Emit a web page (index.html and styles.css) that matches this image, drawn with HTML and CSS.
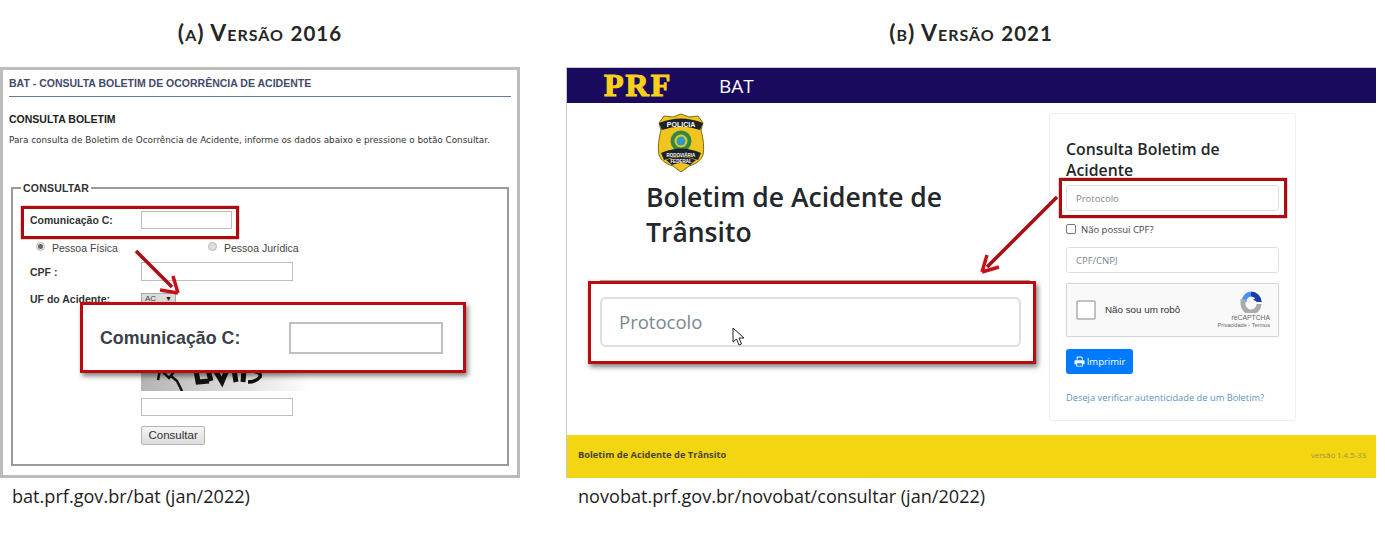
FILE: index.html
```html
<!DOCTYPE html>
<html lang="pt-BR">
<head>
<meta charset="utf-8">
<title>BAT - Versões 2016 e 2021</title>
<link rel="stylesheet" href="styles.css">
</head>
<body>
<main class="slide">
  <section class="version version-old">
    <h2 class="version-title">(a) Versão <span class="year">2016</span></h2>
    <div class="old-panel">
      <h1 class="old-heading">BAT - CONSULTA BOLETIM DE OCORRÊNCIA DE ACIDENTE</h1>
      <h3 class="old-sub">CONSULTA BOLETIM</h3>
      <p class="old-intro">Para consulta de Boletim de Ocorrência de Acidente, informe os dados abaixo e pressione o botão Consultar.</p>
      <fieldset class="old-fieldset">
        <legend class="old-legend">CONSULTAR</legend>
        <div class="old-row old-row-com">
          <label class="old-label">Comunicação C:</label>
          <span class="old-input old-input-short"></span>
        </div>
        <div class="old-radios">
          <span class="radio-item radio-first"><i class="old-radio old-radio-on"></i>Pessoa Física</span>
          <span class="radio-item"><i class="old-radio"></i>Pessoa Jurídica</span>
        </div>
        <div class="old-row old-row-cpf">
          <label class="old-label">CPF :</label>
          <span class="old-input"></span>
        </div>
        <div class="old-row old-row-uf">
          <label class="old-label">UF do Acidente:</label>
          <span class="old-select">AC<b class="old-caret">▼</b></span>
        </div>
        <div class="old-controls">
          <div class="old-captcha">
            <svg class="captcha-art" width="170" height="24" viewBox="0 0 170 24" aria-hidden="true">
              <g fill="none" stroke="#111">
                <path stroke-width="2.500" d="M19 3 L17 13 M21 4 L28 11 L33 5 M30 9 L36 14 L41 24"/>
                <path stroke-width="5" d="M55 3 L57 15 L68 14 M67 3 L70 14 M74 3 L81 15 L86 3 M93 3 L95 15 M103 3 L102 15"/>
                <path stroke-width="3.500" d="M110 4 Q121 5 119 10 Q115 15 107 15"/>
                <path stroke-width="2" stroke="#c01018" d="M150 5 L156 5"/>
              </g>
            </svg>
          </div>
          <span class="old-input old-input-captcha"></span>
          <span class="old-button">Consultar</span>
        </div>
      </fieldset>

      <div class="mark mark-old"></div>
      <svg class="arrow arrow-old" width="60" height="60" viewBox="0 0 60 60" aria-hidden="true">
        <path d="M4 5 L40 41" stroke="#a80f14" stroke-width="3.500" fill="none"/>
        <path d="M46 47 L41 30 M46 47 L28 44" stroke="#c8101a" stroke-width="3.500" fill="none"/>
      </svg>
      <div class="zoom-box zoom-old">
        <span class="zoom-old-label">Comunicação C:</span>
        <span class="zoom-old-input"></span>
      </div>
    </div>
    <p class="caption">bat.prf.gov.br/bat (jan/2022)</p>
  </section>

  <section class="version version-new">
    <h2 class="version-title">(b) Versão <span class="year">2021</span></h2>
    <div class="new-panel">
      <header class="new-header">
        <span class="prf-logo">PRF</span>
        <span class="new-brand">BAT</span>
      </header>
      <div class="new-body">
        <div class="new-main">
          <svg class="badge" width="50" height="60" viewBox="0 0 50 60" aria-hidden="true">
            <path d="M25 1 L33 4 L42 3 L47 10 L45 17 Q49 32 47 42 Q44 50 33 53 L25 59 L17 53 Q6 50 3 42 Q1 32 5 17 L3 10 L8 3 L17 4 Z" fill="#f2c51e" stroke="#7d6a20" stroke-width="1"/>
            <path d="M3 10 Q25 1 47 10 L44 17 Q25 10 6 17 Z" fill="#1d2128"/>
            <text class="badge-top" x="25" y="14">POLICIA</text>
            <circle cx="25" cy="28" r="10.500" fill="#2e8a46"/>
            <circle cx="25" cy="28" r="6.500" fill="#f2c51e"/>
            <circle cx="25" cy="28" r="4.500" fill="#2c9bc5"/>
            <path d="M5 40 Q25 31 45 40 L42 47 Q25 40 8 47 Z M10 47 Q25 41 40 47 L34 52 Q25 48 16 52 Z" fill="#1d2128"/>
            <text class="badge-low" x="25" y="44">RODOVIÁRIA</text>
            <text class="badge-low" x="25" y="50">FEDERAL</text>
          </svg>
          <h1 class="new-title">Boletim de Acidente de Trânsito</h1>
          <hr class="new-rule">
        </div>
        <aside class="new-card">
          <h3 class="card-title">Consulta Boletim de Acidente</h3>
          <div class="new-input card-protocol">Protocolo</div>
          <label class="card-check"><i class="check-box"></i>Não possui CPF?</label>
          <div class="new-input card-cpf">CPF/CNPJ</div>
          <div class="recaptcha">
            <i class="re-box"></i>
            <span class="re-text">Não sou um robô</span>
            <div class="re-brand">
              <svg class="re-logo" width="24" height="22" viewBox="0 0 24 22" aria-hidden="true">
                <path d="M5 11 A8 8 0 0 1 12 3" fill="none" stroke="#4a90f0" stroke-width="5"/>
                <path d="M12 3 A8 8 0 0 1 20 11" fill="none" stroke="#1f3da8" stroke-width="5"/>
                <path d="M20 11 L23 11 L19 5 L14 9 Z" fill="#1f3da8"/>
                <path d="M20 13 A8 8 0 0 1 4 13 L4 8" fill="none" stroke="#ababab" stroke-width="5"/>
              </svg>
              <span class="re-name">reCAPTCHA</span>
              <span class="re-links">Privacidade - Termos</span>
            </div>
          </div>
          <span class="print-button">
            <svg width="11" height="11" viewBox="0 0 12 12" aria-hidden="true"><path fill="#fff" d="M3 0.5h5l1.5 1.5V4H8.600V2.600L7.600 1.500H4V4H3Z M1.500 4.500h9a1 1 0 0 1 1 1V9H9.500v2.500h-7V9H.5V5.500a1 1 0 0 1 1-1Z M3.500 8v2.500h5V8Z" fill-rule="evenodd"/></svg>
            Imprimir
          </span>
          <a class="card-link">Deseja verificar autenticidade de um Boletim?</a>
        </aside>
      </div>
      <footer class="new-footer">
        <strong class="footer-name">Boletim de Acidente de Trânsito</strong>
        <span class="footer-version">versão 1.4.5-33</span>
      </footer>

      <div class="mark mark-new"></div>
      <svg class="arrow arrow-new" width="90" height="90" viewBox="0 0 90 90" aria-hidden="true">
        <path d="M80 4 L10 74" stroke="#a80f14" stroke-width="3.500" fill="none"/>
        <path d="M5 79 L10 62 M5 79 L22 74" stroke="#c8101a" stroke-width="3.500" fill="none"/>
      </svg>
      <div class="zoom-box zoom-new">
        <div class="zoom-new-input">Protocolo</div>
      </div>
      <svg class="cursor" width="14" height="20" viewBox="0 0 14 20" aria-hidden="true">
        <path d="M1 1 L1 15 L4.500 12 L7 18 L9.500 17 L7 11 L12 11 Z" fill="#fff" stroke="#222" stroke-width="1"/>
      </svg>
    </div>
    <p class="caption">novobat.prf.gov.br/novobat/consultar (jan/2022)</p>
  </section>
</main>
</body>
</html>
```

FILE: styles.css
```css
* { box-sizing: border-box; }
html, body { margin: 0; padding: 0; background: #fff; }
body { width: 1385px; height: 534px; overflow: hidden; font-family: "Open Sans", sans-serif; }

.slide { display: grid; grid-template-columns: 520px 810px; column-gap: 46px; }
.version { display: flex; flex-direction: column; }
.version-title {
  margin: 0; height: 67px; padding-top: 17px;
  text-align: center; font: 700 23px/30px Lato, sans-serif;
  font-variant: small-caps; letter-spacing: 1px; color: #262626;
}
.year { font-size: 20.500px; }
.caption { margin: 6px 0 0 12px; font: 400 18.100px/24px "Open Sans", sans-serif; color: #1d1d1d; }

/* 2016 panel */
.old-panel {
  position: relative; width: 520px; height: 411px;
  border: 3px solid #bcbcbc; padding: 6px 6px 0;
  font-family: "Liberation Sans", sans-serif; color: #333;
}
.old-heading {
  margin: 0; padding-bottom: 6px; border-bottom: 1px solid #66789c;
  font-size: 10.500px; line-height: 14px; font-weight: 700; color: #434a6b;
}
.old-sub { margin: 15px 0 0; font-size: 10.500px; line-height: 14px; font-weight: 700; color: #222; }
.old-intro { margin: 7px 0 0; font: 400 8.840px/14px "DejaVu Sans", sans-serif; color: #333; }
.old-fieldset {
  margin: 34px 2px 0; padding: 0 0 0 17px; height: 285px;
  border: 2px solid #9a9a9a; border-radius: 0;
}
.old-legend { margin-left: -9px; padding: 0 2px; font-size: 10.500px; line-height: 14px; font-weight: 700; letter-spacing: .2px; color: #333; }
.old-row { display: grid; grid-template-columns: 111px auto; align-items: center; justify-content: start; }
.old-row-com { margin-top: 15px; height: 19px; }
.old-row-cpf { margin-top: 5px; height: 19px; }
.old-row-uf { margin-top: 11px; height: 13px; }
.old-label { font-size: 10.500px; font-weight: 700; color: #333; }
.old-input { display: block; width: 152px; height: 19px; border: 1px solid #bdbdbd; background: #fff; }
.old-input-short { width: 91px; height: 18px; }
.old-radios { display: flex; height: 17px; margin-top: 11px; padding-left: 6px; font-size: 10.500px; color: #444; }
.radio-item { display: flex; align-items: center; height: 15px; }
.radio-first { width: 172px; }
.old-radio { width: 9px; height: 9px; margin: -3px 7px 0 0; border-radius: 50%; border: 1px solid #b8b8b8; background: #dedede; }
.old-radio-on { background: radial-gradient(circle, #666 0 2px, #e4e4e4 3px); }
.old-select { display: flex; align-items: center; justify-content: space-between; width: 35px; height: 11px; padding: 0 3px; font-size: 8px; color: #444; border: 1px solid #aaa; background: #dcdcdc; }
.old-caret { font-size: 7px; color: #222; }
.old-controls { margin: 12px 0 0 111px; display: flex; flex-direction: column; align-items: flex-start; }
.old-captcha { width: 170px; height: 74px; display: flex; align-items: flex-end; background: linear-gradient(90deg, #b4b4b4, #dcdcdc 55%, #fff); }
.captcha-art { display: block; }
.old-input-captcha { margin-top: 7px; height: 18px; }
.old-button { margin-top: 10px; padding: 0 6.500px; height: 19px; font-size: 11.500px; line-height: 17px; color: #333; border: 1px solid #b4b4b4; border-radius: 2px; background: linear-gradient(#f6f6f6, #dcdcdc); }

/* annotations */
.mark { position: absolute; border: 3px solid #aa0c10; box-shadow: 0 0 1px #600; }
.mark-old { left: 18px; top: 136px; width: 218px; height: 33px; }
.mark-new { left: 492px; top: 110px; width: 228px; height: 40px; }
.arrow { position: absolute; }
.arrow-old { left: 129px; top: 176px; }
.arrow-new { left: 410px; top: 125px; }
.zoom-box { position: absolute; background: #fff; border: 3px solid #bb0a10; box-shadow: 2px 3px 5px rgba(0,0,0,.5); }
.zoom-old { left: 77px; top: 232px; width: 386px; height: 71px; display: flex; align-items: center; padding-left: 17px; }
.zoom-old-label { width: 189px; font: 700 17.800px/24px "Liberation Sans", sans-serif; color: #3a3f4a; }
.zoom-old-input { width: 154px; height: 32px; border: 2px solid #c0c0c0; background: #fff; }
.zoom-new { left: 21px; top: 213px; width: 448px; height: 83px; padding: 13px 12px 0 9px; }
.zoom-new-input { height: 50px; padding: 0 17px; display: flex; align-items: center; border: 2px solid #dcdee0; border-radius: 6px; font: 400 18.500px/24px "Open Sans", sans-serif; color: #7b8791; }
.cursor { position: absolute; left: 165px; top: 259px; }

/* 2021 panel */
.new-panel { position: relative; width: 810px; height: 411px; display: flex; flex-direction: column; border: 1px solid #c9c9c9; border-bottom: 0; border-right: 0; }
.new-header { height: 35px; flex: none; display: flex; align-items: center; padding-left: 37px; background: #1a0a5e; }
.prf-logo { display: inline-block; width: 115px; font: 700 32px/35px "Liberation Serif", serif; letter-spacing: 2px; color: #f8d01c; -webkit-text-stroke: 1.200px #f8d01c; }
.new-brand { font: 400 19px/26px "Open Sans", sans-serif; color: #fff; }
.new-body { flex: 1; display: flex; justify-content: space-between; padding-right: 80px; }
.new-main { width: 470px; padding: 10px 0 0 79px; }
.badge { display: block; margin-left: 10px; }
.badge-top { font: 700 7px "Liberation Sans", sans-serif; fill: #fff; text-anchor: middle; }
.badge-low { font: 700 4.500px "Liberation Sans", sans-serif; fill: #fff; text-anchor: middle; }
.new-title { margin: 7px 0 0; width: 320px; font: 600 26.500px/35px "Open Sans", sans-serif; color: #23272b; }
.new-rule { margin: 30px 0 0 -46px; width: 430px; border: 0; border-top: 1px solid #9fb0b8; }
.new-card { width: 247px; height: 308px; margin-top: 10px; padding: 25px 16px 0 16px; border: 1px solid #eceeef; border-radius: 3px; display: flex; flex-direction: column; align-items: flex-start; }
.card-title { margin: 0; font: 600 15.800px/21px "Open Sans", sans-serif; color: #23272b; }
.new-input { width: 213px; height: 26px; padding: 0 9px; display: flex; align-items: center; border: 1px solid #dcdfe2; border-radius: 3px; font-size: 9.500px; color: #7b8791; }
.card-protocol { margin-top: 4px; }
.card-check { margin-top: 12px; display: flex; align-items: center; height: 12px; font-size: 9.500px; color: #444; }
.check-box { width: 10px; height: 10px; margin-right: 5px; border: 1px solid #777; border-radius: 2px; }
.card-cpf { margin-top: 12px; }
.recaptcha { position: relative; width: 213px; height: 54px; margin-top: 10px; display: flex; align-items: center; padding-left: 9px; border: 1px solid #d6d6d6; border-radius: 2px; background: #f9f9f9; box-shadow: 0 0 2px rgba(0,0,0,.1); }
.re-box { width: 20px; height: 20px; margin-right: 9px; background: #fff; border: 2px solid #c1c1c1; border-radius: 2px; }
.re-text { font: 400 9.800px/14px "Liberation Sans", sans-serif; color: #333; }
.re-brand { margin-left: auto; width: 62px; display: flex; flex-direction: column; align-items: flex-end; padding-right: 8px; }
.re-logo { display: block; margin-right: 7px; }
.re-name { font: 400 6.800px/9px "Liberation Sans", sans-serif; color: #666; }
.re-links { font: 400 5.600px/7px "Liberation Sans", sans-serif; color: #666; white-space: nowrap; }
.print-button { margin-top: 12px; width: 67px; height: 25px; display: flex; align-items: center; justify-content: center; gap: 2px; background: #007bff; border-radius: 3px; font: 400 9.500px/14px "Open Sans", sans-serif; color: #fff; white-space: nowrap; }
.card-link { margin-top: 17px; font-size: 9.300px; line-height: 14px; color: #5d93bd; white-space: nowrap; }
.new-footer { height: 43px; flex: none; display: flex; align-items: center; justify-content: space-between; padding: 0 10px 4px 11px; background: #f3d511; }
.footer-name { font: 700 9.300px/12px "Open Sans", sans-serif; color: #4a4630; }
.footer-version { font-size: 7.800px; color: #9c9350; }
```
